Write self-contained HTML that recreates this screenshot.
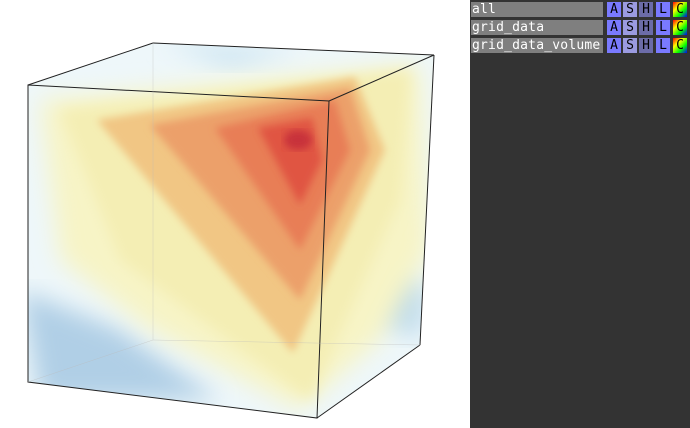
<!DOCTYPE html>
<html><head><style>
body{margin:0;width:690px;height:428px;background:#fff;overflow:hidden;position:relative;font-family:"DejaVu Sans Mono","Liberation Mono",monospace}
#panel{position:absolute;left:470px;top:0;width:220px;height:428px;background:#333}
.row{position:absolute;left:1px;height:16px}
.nm{position:absolute;left:0;top:0;width:132px;height:15px;background:#7f7f7f;color:#fff;font-size:13px;line-height:15px;padding-left:1px;box-sizing:border-box;letter-spacing:0.2px;white-space:nowrap;overflow:hidden}
.b{position:absolute;top:0;width:14px;height:15px;color:#000;font-size:13px;line-height:15px;text-align:center}
</style></head><body>
<svg width="470" height="428" style="position:absolute;left:0;top:0">
<defs>
<filter id="f1"><feGaussianBlur stdDeviation="12"/></filter>
<filter id="f2"><feGaussianBlur stdDeviation="7"/></filter>
<filter id="f3"><feGaussianBlur stdDeviation="4"/></filter>
<clipPath id="c"><polygon points="28,85 153,43 434,55 420,345 317,418 28,382"/></clipPath>
</defs>
<g clip-path="url(#c)">
<polygon points="28,85 153,43 434,55 420,345 317,418 28,382" fill="#eef7fa"/>
<polygon points="20,290 120,330 220,400 40,400" fill="#b0cfe6" filter="url(#f1)"/>
<polygon points="380,260 430,290 420,340 370,320" fill="#c0dcec" filter="url(#f1)"/>
<polygon points="160,40 300,50 230,70" fill="#cfe6f2" filter="url(#f1)"/>
<polygon points="40,100 420,65 430,250 380,340 300,410 150,330 60,260" fill="#f7f4c6" filter="url(#f1)"/>
<polygon points="60,110 410,70 400,200 310,400 120,260" fill="#f4eeb4" filter="url(#f2)"/>
<polygon points="97,120 355,77 385,150 293,353" fill="#f1c684" filter="url(#f3)"/>
<polygon points="150,125 350,88 370,150 300,300" fill="#eca06a" filter="url(#f3)"/>
<polygon points="215,128 335,100 350,150 300,250" fill="#e87e56" filter="url(#f3)"/>
<polygon points="258,128 312,118 322,160 300,205" fill="#e05443" filter="url(#f3)"/>
<ellipse cx="298" cy="140" rx="14" ry="10" fill="#c8303a" filter="url(#f3)"/>
</g>
<g fill="none" stroke="#222" stroke-width="1">
<polygon points="28,85 329,101 317,418 28,382"/>
<line x1="28" y1="85" x2="153" y2="43"/>
<line x1="153" y1="43" x2="434" y2="55"/>
<line x1="434" y1="55" x2="329" y2="101"/>
<line x1="434" y1="55" x2="420" y2="345"/>
<line x1="420" y1="345" x2="317" y2="418"/>
</g>
<g fill="none" stroke="#bbb" stroke-width="0.5" opacity="0.6">
<line x1="153" y1="43" x2="153" y2="340"/>
<line x1="153" y1="340" x2="420" y2="345"/>
<line x1="153" y1="340" x2="28" y2="382"/>
</g>
</svg>
<div id="panel">
<div class="row" style="top:2px"><div class="nm">all</div><div class="b" style="left:136px;background:#7a7aff">A</div><div class="b" style="left:152px;background:#9b9be0">S</div><div class="b" style="left:168px;background:#6c6ca8">H</div><div class="b" style="left:185px;background:#7a7aff">L</div><div class="b" style="left:202px;background:linear-gradient(135deg,#f00,#ff0,#0f0,#00f)">C</div></div>
<div class="row" style="top:20px"><div class="nm">grid_data</div><div class="b" style="left:136px;background:#7a7aff">A</div><div class="b" style="left:152px;background:#9b9be0">S</div><div class="b" style="left:168px;background:#6c6ca8">H</div><div class="b" style="left:185px;background:#7a7aff">L</div><div class="b" style="left:202px;background:linear-gradient(135deg,#f00,#ff0,#0f0,#00f)">C</div></div>
<div class="row" style="top:38px"><div class="nm">grid_data_volume</div><div class="b" style="left:136px;background:#7a7aff">A</div><div class="b" style="left:152px;background:#9b9be0">S</div><div class="b" style="left:168px;background:#6c6ca8">H</div><div class="b" style="left:185px;background:#7a7aff">L</div><div class="b" style="left:202px;background:linear-gradient(135deg,#f00,#ff0,#0f0,#00f)">C</div></div>
</div>
</body></html>
